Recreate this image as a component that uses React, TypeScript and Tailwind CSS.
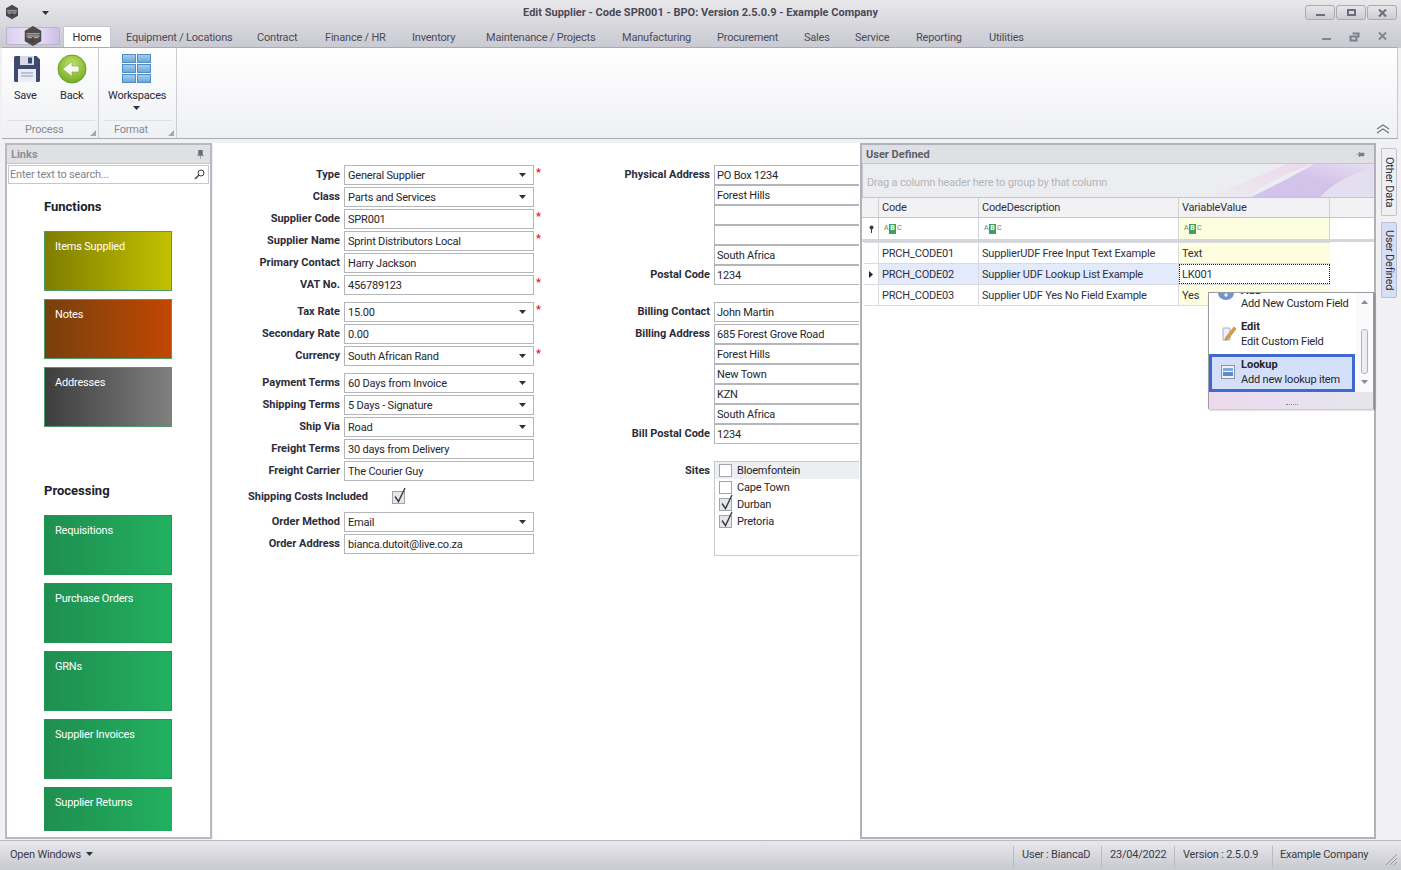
// Edit Supplier window: ribbon, links panel, supplier form, user defined grid
import type { ReactNode } from "react";

const FONT = "[font-family:Roboto,sans-serif]";
const BOLD = "font-['Noto_Sans',sans-serif] font-bold leading-[16px] tracking-normal";
const LABEL = `${BOLD} tracking-[0.1px] text-[#2c2c3a]`;

interface Field {
  label?: string;
  value: string;
  combo?: boolean;
  req?: boolean;
  gap?: number;
}

const LEFT_FIELDS: Field[] = [
  { label: "Type", value: "General Supplier", combo: true, req: true },
  { label: "Class", value: "Parts and Services", combo: true },
  { label: "Supplier Code", value: "SPR001", req: true },
  { label: "Supplier Name", value: "Sprint Distributors Local", req: true },
  { label: "Primary Contact", value: "Harry Jackson" },
  { label: "VAT No.", value: "456789123", req: true },
  { label: "Tax Rate", value: "15.00", combo: true, req: true, gap: 5 },
  { label: "Secondary Rate", value: "0.00" },
  { label: "Currency", value: "South African Rand", combo: true, req: true },
  { label: "Payment Terms", value: "60 Days from Invoice", combo: true, gap: 5 },
  { label: "Shipping Terms", value: "5 Days - Signature", combo: true },
  { label: "Ship Via", value: "Road", combo: true },
  { label: "Freight Terms", value: "30 days from Delivery" },
  { label: "Freight Carrier", value: "The Courier Guy" },
];

const RIGHT_TOP = ["PO Box 1234", "Forest Hills", "", "", "South Africa"];
const BILLING = ["685 Forest Grove Road", "Forest Hills", "New Town", "KZN", "South Africa"];
const TABS = [
  ["Equipment / Locations", 126],
  ["Contract", 257],
  ["Finance / HR", 325],
  ["Inventory", 412],
  ["Maintenance / Projects", 486],
  ["Manufacturing", 622],
  ["Procurement", 717],
  ["Sales", 804],
  ["Service", 855],
  ["Reporting", 916],
  ["Utilities", 989],
] as const;

function Caret({ className = "" }: { className?: string }) {
  return (
    <svg width="7" height="4" viewBox="0 0 7 4" className={className}>
      <path d="M0 0h7L3.500 4z" fill="#30303a" />
    </svg>
  );
}

function Logo({ size }: { size: number }) {
  return (
    <svg width={size} height={size} viewBox="0 0 20 20">
      <path d="M10 1l7.500 4.300v9.400L10 19l-7.500-4.300V5.300z" fill="#4c4a4c" />
      <path d="M4 8h12M4 10h12" stroke="#d8d8d8" strokeWidth="0.800" />
      <path d="M5 11.500h4M11 11.500h4" stroke="#c9c9c9" strokeWidth="0.800" />
      <circle cx="9.500" cy="14" r="1.500" fill="#7a2a30" />
    </svg>
  );
}

// Background artwork of the skin, 260x33 px at the right end of the group panel
function Swirl({ className = "", id }: { className?: string; id: string }) {
  return (
    <svg viewBox="0 0 260 33" preserveAspectRatio="none" className={className}>
      <defs>
        <linearGradient id={`${id}-pink`} x1="0" y1="1" x2="1" y2="0">
          <stop offset="0" stopColor="#ecebf0" />
          <stop offset="1" stopColor="#ecd9ec" />
        </linearGradient>
        <linearGradient id={`${id}-band`} x1="0" y1="1" x2="1" y2="0">
          <stop offset="0" stopColor="#cfc4ec" />
          <stop offset="0.500" stopColor="#d4c2ea" />
          <stop offset="1" stopColor="#e6def2" />
        </linearGradient>
      </defs>
      <path d="M90 33C125 22 150 10 172 0h25c-30 12-50 22-62 33z" fill={`url(#${id}-pink)`} />
      <path d="M137 33C165 20 182 10 200 0h60v4c-28 8-44 18-53 29z" fill={`url(#${id}-band)`} />
      <path d="M207 33c9-11 25-21 53-29v29z" fill="#e4dff0" />
    </svg>
  );
}

function Box({ value, combo, wide }: { value: string; combo?: boolean; wide?: boolean }) {
  return (
    <div
      className={`flex h-[20px] items-center border border-[#b4b6ba] bg-white pr-[7px] text-[#26262e] ${
        wide ? "w-[145px] border-r-0 pl-[2px]" : "w-[190px] pl-[3px]"
      }`}
    >
      <span className="flex-1 truncate pt-px">{value}</span>
      {combo && <Caret />}
    </div>
  );
}

function FormRow({ field }: { field: Field }) {
  return (
    <div className="flex h-[22px] items-start" style={{ marginTop: field.gap ?? 0 }}>
      <label className={`w-[127px] pr-[4px] pt-[2px] text-right ${LABEL}`}>{field.label}</label>
      <Box value={field.value} combo={field.combo} />
      {field.req && <span className="ml-[2px] font-bold leading-[16px] text-[#e0202c]">*</span>}
    </div>
  );
}

function RightRow({ label, value, h = "h-[20px]", mt = "" }: { label?: string; value: string; h?: string; mt?: string }) {
  return (
    <div className={`flex items-start ${h} ${mt}`}>
      <label className={`w-[117px] pr-[4px] pt-[2px] text-right ${LABEL}`}>{label}</label>
      <Box value={value} wide />
    </div>
  );
}

function Check({ on }: { on: boolean }) {
  return (
    <span className={`relative block h-[13px] w-[13px] border border-[#a2a4ac] ${on ? "bg-[#e4e6ea]" : "bg-white"}`}>
      {on && (
        <svg width="16" height="17" viewBox="0 0 16 17" className="absolute -top-[5px] left-0">
          <path d="M2 9.500l3.500 5L12 1" fill="none" stroke="#3a3a46" strokeWidth="1.400" />
        </svg>
      )}
    </span>
  );
}

function Tile({ top, label, from, to, border }: { top: number; label: string; from: string; to: string; border: string }) {
  return (
    <div
      className={`absolute left-[44px] h-[60px] w-[128px] border pl-[10px] pt-[6px] text-white ${from} ${to} ${border} bg-gradient-to-r`}
      style={{ top }}
    >
      {label}
    </div>
  );
}

function AbcFilter() {
  return (
    <span className="flex items-center text-[7px] leading-none text-[#5a8a6a]">
      <span className="w-[5px]">A</span>
      <span className="flex h-[10px] w-[7px] items-center justify-center bg-[#3da35a] font-bold text-white">B</span>
      <span className="ml-[1px]">C</span>
    </span>
  );
}

function GridRow({
  code,
  desc,
  value,
  current,
}: {
  code: string;
  desc: string;
  value: ReactNode;
  current?: boolean;
}) {
  return (
    <div className="flex h-[21px] border-b border-[#d9dbe0]">
      <div className="flex w-[15px] items-center justify-center border-r border-[#d9dbe0] bg-white">
        {current && (
          <svg width="4" height="7" viewBox="0 0 4 7">
            <path d="M0 0l4 3.500L0 7z" fill="#26262e" />
          </svg>
        )}
      </div>
      <div className={`w-[100px] truncate border-r border-[#d9dbe0] px-[3px] pt-[2px] ${current ? "bg-[#e2eafb]" : ""}`}>{code}</div>
      <div className={`w-[200px] truncate border-r border-[#d9dbe0] px-[3px] pt-[2px] ${current ? "bg-[#e2eafb]" : ""}`}>{desc}</div>
      {value}
    </div>
  );
}

export default function App() {
  return (
    <div className={`relative h-[870px] w-[1401px] overflow-hidden bg-[#f1f1f4] text-[11px] leading-[18px] tracking-[-0.2px] text-[#30303c] ${FONT}`}>
      {/* ======= TITLE BAR + TABS ======= */}
      <div className="absolute inset-x-0 top-0 h-[48px] bg-gradient-to-b from-[#e8e8eb] to-[#c8c9d1]" />
      <div className="absolute left-[4px] top-[4px]">
        <Logo size={16} />
      </div>
      <Caret className="absolute left-[42px] top-[11px]" />
      <div className={`absolute inset-x-0 top-[5px] text-center text-[#4a4a56] ${BOLD} tracking-[0.24px]`}>
        Edit Supplier - Code SPR001 - BPO: Version 2.5.0.9 - Example Company
      </div>
      <div className="absolute left-[1305px] top-[5px] flex gap-[1px]">
        {["min", "max", "close"].map((k) => (
          <div key={k} className="flex h-[15px] w-[30px] items-center justify-center rounded-[3px] border border-[#a9abb3] bg-gradient-to-b from-[#e6e6ea] to-[#ccced5]">
            {k === "min" && <span className="mt-[4px] h-[2px] w-[9px] bg-[#6a6c78]" />}
            {k === "max" && <span className="h-[7px] w-[9px] border-2 border-[#6a6c78]" />}
            {k === "close" && (
              <svg width="9" height="8" viewBox="0 0 9 8">
                <path d="M1 0.500l7 7M8 0.500l-7 7" stroke="#6a6c78" strokeWidth="2" />
              </svg>
            )}
          </div>
        ))}
      </div>

      <div className="absolute left-[6px] top-[27px] h-[18px] w-[54px] rounded-[2px] border border-[#b8b6cc] bg-gradient-to-r from-[#dccdf0] via-[#efe7f8] to-[#cdbce8]" />
      <div className="absolute left-[22px] top-[25px]">
        <Logo size={22} />
      </div>
      <div className="absolute left-[63px] top-[26px] h-[22px] w-[48px] rounded-t-[2px] border border-b-0 border-[#c4c5cc] bg-white pt-[2px] text-center text-[#2a2a34]">
        Home
      </div>
      {TABS.map(([name, x]) => (
        <div key={name} className="absolute top-[29px] text-[#4c4c58]" style={{ left: x }}>
          {name}
        </div>
      ))}
      <span className="absolute left-[1322px] top-[38px] h-[2px] w-[9px] bg-[#84868f]" />
      <svg width="11" height="10" viewBox="0 0 11 10" className="absolute left-[1349px] top-[32px]">
        <path d="M3.500 1.500h6v4M1.500 4.500h6v4h-6z" fill="none" stroke="#7c7e88" strokeWidth="2" />
      </svg>
      <svg width="9" height="8" viewBox="0 0 9 8" className="absolute left-[1378px] top-[32px]">
        <path d="M1 0.500l7 7M8 0.500l-7 7" stroke="#84868f" strokeWidth="2" />
      </svg>

      {/* ======= RIBBON ======= */}
      <div className="absolute left-[2px] top-[47px] h-[92px] w-[1396px] border-y border-y-[#a9abb2] border-r border-r-[#c9cad0] bg-gradient-to-b from-white to-[#eff0f4]">
        <div className="absolute inset-y-0 left-[96px] w-px bg-[#cdced4]" />
        <div className="absolute inset-y-0 left-[174px] w-px bg-[#cdced4]" />
        <div className="absolute left-[5px] top-[72px] h-px w-[88px] bg-[#dedfe3]" />
        <div className="absolute left-[102px] top-[72px] h-px w-[68px] bg-[#dedfe3]" />
      </div>
      <svg width="28" height="28" viewBox="0 0 28 28" className="absolute left-[13px] top-[55px]">
        <path d="M1 2.500A1.500 1.500 0 0 1 2.500 1h21L27 4.500v21a1.500 1.500 0 0 1-1.500 1.500h-23A1.500 1.500 0 0 1 1 25.500z" fill="#3d4a6d" />
        <rect x="7" y="1" width="14" height="9" fill="#d8dbe6" />
        <rect x="15" y="2.500" width="4" height="6" fill="#3d4a6d" />
        <rect x="5" y="14" width="18" height="13" fill="#e8edf8" />
        <path d="M8 18h12M8 21h12" stroke="#8c98b4" />
      </svg>
      <svg width="30" height="30" viewBox="0 0 30 30" className="absolute left-[57px] top-[54px]">
        <defs>
          <radialGradient id="back" cx="50%" cy="35%" r="70%">
            <stop offset="0" stopColor="#c4e46a" />
            <stop offset="1" stopColor="#6ca81e" />
          </radialGradient>
        </defs>
        <circle cx="15" cy="15" r="14" fill="url(#back)" stroke="#6e9c2c" />
        <path d="M5.500 15L15 7.500v4.500h7v6h-7v4.500z" fill="#f6f8ee" stroke="#7ca03a" strokeWidth="0.600" />
      </svg>
      <div className="absolute left-[122px] top-[54px] grid h-[29px] w-[29px] grid-cols-2 gap-[1px]">
        {[0, 1, 2, 3, 4, 5].map((i) => (
          <span key={i} className="border border-[#4d8fc4] bg-gradient-to-b from-[#a4cbe9] to-[#6fa8d6]" />
        ))}
      </div>
      <div className="absolute left-[14px] top-[87px] text-[#2a2a34]">Save</div>
      <div className="absolute left-[60px] top-[87px] text-[#2a2a34]">Back</div>
      <div className="absolute left-[108px] top-[87px] text-[#2a2a34]">Workspaces</div>
      <Caret className="absolute left-[133px] top-[106px]" />
      <div className="absolute left-[25px] top-[121px] text-[#8a8b92]">Process</div>
      <div className="absolute left-[114px] top-[121px] text-[#8a8b92]">Format</div>
      <svg width="6" height="6" viewBox="0 0 6 6" className="absolute left-[90px] top-[130px]">
        <path d="M6 0v6H0z" fill="#a6a8ae" />
      </svg>
      <svg width="6" height="6" viewBox="0 0 6 6" className="absolute left-[168px] top-[130px]">
        <path d="M6 0v6H0z" fill="#a6a8ae" />
      </svg>
      <svg width="14" height="10" viewBox="0 0 14 10" className="absolute left-[1376px] top-[124px]">
        <path d="M1 5l6-4 6 4M1 9l6-4 6 4" fill="none" stroke="#74767e" strokeWidth="1.200" />
      </svg>

      {/* ======= LINKS PANEL ======= */}
      <div className="absolute left-[5px] top-[143px] h-[696px] w-[207px] border-2 border-[#b8bac2] bg-white">
        <div className={`flex h-[19px] items-center justify-between border-b border-[#c4c6cc] bg-[#dfe0e4] pl-[4px] pr-[6px] pt-[1px] text-[#8e9098] ${BOLD}`}>
          Links
          <svg width="7" height="9" viewBox="0 0 7 9">
            <path d="M1.500 0h4v4.500l1 1h-6l1-1zM3.500 5.500V9" fill="#6a6c74" stroke="#6a6c74" strokeWidth="0.500" />
          </svg>
        </div>
        <div className="mx-px mt-px flex h-[19px] items-center border border-[#c6c8ce] pl-[1px] pr-[3px] text-[#82848c]">
          <span className="flex-1 pt-px">Enter text to search...</span>
          <svg width="11" height="11" viewBox="0 0 11 11">
            <circle cx="7" cy="4" r="3" fill="none" stroke="#3c3c44" />
            <path d="M4.800 6.300L1 10" stroke="#3c3c44" strokeWidth="1.400" />
          </svg>
        </div>
      </div>
      <div className={`absolute left-[44px] top-[199px] text-[13px] text-[#20202c] ${BOLD}`}>Functions</div>
      <Tile top={231} label="Items Supplied" from="from-[#807d00]" to="to-[#c2c200]" border="border-[#4f9a6a]" />
      <Tile top={299} label="Notes" from="from-[#783f0c]" to="to-[#c24700]" border="border-[#4f9a6a]" />
      <Tile top={367} label="Addresses" from="from-[#3e3e3e]" to="to-[#808080]" border="border-[#4f9a6a]" />
      <div className={`absolute left-[44px] top-[483px] text-[13px] text-[#20202c] ${BOLD}`}>Processing</div>
      {[
        ["Requisitions", 515],
        ["Purchase Orders", 583],
        ["GRNs", 651],
        ["Supplier Invoices", 719],
      ].map(([label, top]) => (
        <Tile key={label} top={top as number} label={label as string} from="from-[#1f8f50]" to="to-[#22b060]" border="border-[#1f9a56]" />
      ))}
      <div className="absolute left-[44px] top-[787px] h-[44px] w-[128px] bg-gradient-to-r from-[#1f8f50] to-[#22b060] pl-[11px] pt-[7px] text-white">
        Supplier Returns
      </div>

      {/* ======= SUPPLIER FORM ======= */}
      <div className="absolute left-[213px] top-[143px] h-[697px] w-[647px] bg-white" />
      <div className="absolute left-[217px] top-[165px]">
        {LEFT_FIELDS.map((f) => (
          <FormRow key={f.label} field={f} />
        ))}
        <div className="mt-[5px] flex h-[22px] items-start">
          <label className={`w-[165px] whitespace-nowrap pl-[31px] pt-[1px] ${LABEL}`}>Shipping Costs Included</label>
          <span className="ml-[10px] mt-[3px]">
            <Check on />
          </span>
        </div>
        <div className="mt-[2px]">
          <FormRow field={{ label: "Order Method", value: "Email", combo: true }} />
          <FormRow field={{ label: "Order Address", value: "bianca.dutoit@live.co.za" }} />
        </div>
      </div>
      <div className="absolute left-[597px] top-[165px]">
        {RIGHT_TOP.map((v, i) => (
          <RightRow key={i} label={i === 0 ? "Physical Address" : undefined} value={v} />
        ))}
        <RightRow label="Postal Code" value="1234" />
        <RightRow label="Billing Contact" value="John Martin" h="h-[22px]" mt="mt-[17px]" />
        {BILLING.map((v, i) => (
          <RightRow key={v + i} label={i === 0 ? "Billing Address" : undefined} value={v} />
        ))}
        <RightRow label="Bill Postal Code" value="1234" />
        <div className="mt-[17px] flex items-start">
          <label className={`w-[117px] pr-[4px] pt-[2px] text-right ${LABEL}`}>Sites</label>
          <div className="h-[95px] w-[145px] border border-r-0 border-[#c8cacf] bg-white text-[#26262e]">
            {[
              ["Bloemfontein", false],
              ["Cape Town", false],
              ["Durban", true],
              ["Pretoria", true],
            ].map(([name, on], i) => (
              <div key={name as string} className={`flex h-[17px] items-center gap-[5px] pl-[4px] ${i === 0 ? "bg-[#eceef0]" : ""}`}>
                <Check on={on as boolean} />
                <span className="pt-px">{name}</span>
              </div>
            ))}
          </div>
        </div>
      </div>

      {/* ======= USER DEFINED PANEL ======= */}
      <div className="absolute left-[860px] top-[143px] h-[696px] w-[516px] border-2 border-[#b0b2ba] bg-white">
        <div className={`flex h-[19px] items-center justify-between border-b border-[#c4c6cc] bg-[#dfe0e4] pl-[4px] pr-[9px] pt-[1px] text-[#5c5e6a] ${BOLD}`}>
          User Defined
          <svg width="9" height="7" viewBox="0 0 9 7">
            <path d="M0 3.500h3M3 1v5l1-1h4V2H4z" fill="#7a7c84" stroke="#7a7c84" strokeWidth="0.500" />
          </svg>
        </div>
        <div className="relative h-[34px] overflow-hidden border-b border-[#c4c6cc] border-l border-l-[#c4c6cc] bg-[#ecedf0] pl-[4px] pt-[10px] text-[#b4b5ba]">
          Drag a column header here to group by that column
          <Swirl id="group" className="absolute right-0 top-0 h-full w-[260px]" />
        </div>
        <div className="flex h-[20px] border-b border-[#c4c6cc] bg-[#f2f2f4] pl-[2px]">
          <div className="w-[15px] border-r border-[#d0d2d6]" />
          <div className="w-[100px] border-r border-[#d0d2d6] px-[3px] pt-[1px]">Code</div>
          <div className="w-[200px] border-r border-[#d0d2d6] px-[3px] pt-[1px]">CodeDescription</div>
          <div className="w-[151px] border-r border-[#d0d2d6] px-[3px] pt-[1px]">VariableValue</div>
        </div>
        <div className="flex h-[24px] border-b-[3px] border-[#d4d6da] pl-[2px]">
          <div className="flex w-[15px] items-center justify-center border-r border-[#d0d2d6]">
            <svg width="5" height="8" viewBox="0 0 5 8">
              <circle cx="2.500" cy="2.500" r="2" fill="#3a3a42" />
              <path d="M2.500 4v4" stroke="#3a3a42" />
            </svg>
          </div>
          <div className="flex w-[100px] items-center border-r border-[#d0d2d6] pl-[5px]">
            <AbcFilter />
          </div>
          <div className="flex w-[200px] items-center border-r border-[#d0d2d6] pl-[5px]">
            <AbcFilter />
          </div>
          <div className="flex w-[151px] items-center border-r border-[#d0d2d6] bg-[#fdfde0] pl-[5px]">
            <AbcFilter />
          </div>
        </div>
        <div className="ml-[2px] w-[466px] border-t border-[#d9dbe0]">
          <GridRow
            code="PRCH_CODE01"
            desc="SupplierUDF Free Input Text Example"
            value={<div className="w-[151px] bg-[#fdfde0] px-[3px] pt-[2px]">Text</div>}
          />
          <GridRow
            code="PRCH_CODE02"
            desc="Supplier UDF Lookup List Example"
            current
            value={
              <div className="w-[151px] border border-dotted border-[#20202a] bg-white px-[2px] pt-px">LK001</div>
            }
          />
          <GridRow
            code="PRCH_CODE03"
            desc="Supplier UDF Yes No Field Example"
            value={<div className="w-[151px] bg-[#fdfde0] px-[3px] pt-[2px]">Yes</div>}
          />
        </div>
      </div>

      {/* ======= POPUP MENU ======= */}
      <div className="absolute left-[1208px] top-[292px] h-[117px] w-[166px] overflow-hidden border-l border-r border-t border-[#9a9ca4] bg-white shadow-[1px_1px_2px_rgba(0,0,0,0.3)]">
        <svg width="16" height="7" viewBox="0 0 16 7" className="absolute left-[9px] top-0">
          <path d="M0 0h16a8 7 0 0 1-16 0z" fill="#6f96d2" />
          <path d="M8 0v4M6 2h4" stroke="#fff" strokeWidth="1.200" />
        </svg>
        <div className={`absolute left-[32px] -top-[10px] text-[#26262e] ${BOLD}`}>Add</div>
        <div className="absolute left-[32px] top-[2px] text-[#26262e]">Add New Custom Field</div>
        <div className={`absolute left-[32px] top-[27px] !leading-[13px] text-[#26262e] ${BOLD}`}>Edit</div>
        <div className="absolute left-[32px] top-[42px] leading-[13px] text-[#26262e]">Edit Custom Field</div>
        <svg width="16" height="18" viewBox="0 0 16 18" className="absolute left-[12px] top-[31px]">
          <path d="M2 4h7v12H2z" fill="#eef2f8" stroke="#a8b0c0" />
          <path d="M13 3L5 13l-1 3 3-1 8-10z" fill="#e0a040" stroke="#a86a20" strokeWidth="0.600" />
        </svg>
        <div className="absolute left-0 top-[61px] h-[38px] w-[146px] border-[3px] border-[#3f68d0] bg-[#d4e0fa]">
          <svg width="14" height="14" viewBox="0 0 14 14" className="absolute left-[9px] top-[8px]">
            <rect x="0.500" y="0.500" width="13" height="13" fill="#f2f4fa" stroke="#8a93a8" />
            <rect x="2" y="3" width="10" height="3" fill="#7eaadc" />
            <rect x="2" y="7" width="10" height="4" fill="#5a8cc8" />
          </svg>
          <div className={`absolute left-[29px] top-[1px] !leading-[13px] text-[#26262e] ${BOLD}`}>Lookup</div>
          <div className="absolute left-[29px] top-[16px] leading-[13px] text-[#26262e]">Add new lookup item</div>
        </div>
        <div className="absolute left-[147px] top-0 h-[100px] w-[18px] bg-[#fafafb]">
          <svg width="7" height="4" viewBox="0 0 7 4" className="absolute left-[5px] top-[7px]">
            <path d="M0 4h7L3.500 0z" fill="#8a8c94" />
          </svg>
          <div className="absolute left-[5px] top-[36px] h-[45px] w-[7px] rounded-[3px] border border-[#b0b2ba] bg-[#eceef2]" />
          <svg width="7" height="4" viewBox="0 0 7 4" className="absolute left-[5px] top-[87px]">
            <path d="M0 0h7L3.500 4z" fill="#8a8c94" />
          </svg>
        </div>
        <div className="absolute inset-x-0 top-[99px] h-[18px] bg-gradient-to-r from-[#ecd9ec] via-[#e8e0f0] to-[#e6e6ea]">
          <span className="absolute left-[77px] top-[12px] h-[2px] w-[12px] border-t border-dotted border-[#8a8c94]" />
        </div>
      </div>

      {/* ======= SIDE TABS ======= */}
      <div className="absolute left-[1381px] top-[148px] flex h-[68px] w-[16px] items-center justify-center rounded-r-[2px] border border-[#c2c4ca] bg-[#eef0f3] text-[#30303c] [writing-mode:vertical-rl]">
        Other Data
      </div>
      <div className="absolute left-[1381px] top-[222px] flex h-[76px] w-[16px] items-center justify-center rounded-r-[2px] border border-[#b8bfd6] bg-[#d6def6] text-[#30303c] [writing-mode:vertical-rl]">
        User Defined
      </div>

      {/* ======= STATUS BAR ======= */}
      <div className="absolute inset-x-0 top-[840px] flex h-[30px] items-center border-t border-[#b8bac0] bg-gradient-to-b from-[#e8e8ec] to-[#c8c9d1] pb-[2px] text-[#3c3c48]">
        <span className="absolute left-[10px]">Open Windows</span>
        <Caret className="absolute left-[86px] top-[11px]" />
        {[1013, 1101, 1174, 1272].map((x) => (
          <span key={x} className="absolute top-[5px] h-[21px] w-px bg-[#b8bac2]" style={{ left: x }} />
        ))}
        <span className="absolute left-[1022px]">User : BiancaD</span>
        <span className="absolute left-[1110px]">23/04/2022</span>
        <span className="absolute left-[1183px]">Version : 2.5.0.9</span>
        <span className="absolute left-[1280px]">Example Company</span>
        <svg width="12" height="12" viewBox="0 0 12 12" className="absolute left-[1385px] top-[12px]">
          <path d="M1 12L12 1M5 12l7-7M9 12l3-3" stroke="#9a9ca4" />
        </svg>
      </div>
    </div>
  );
}
